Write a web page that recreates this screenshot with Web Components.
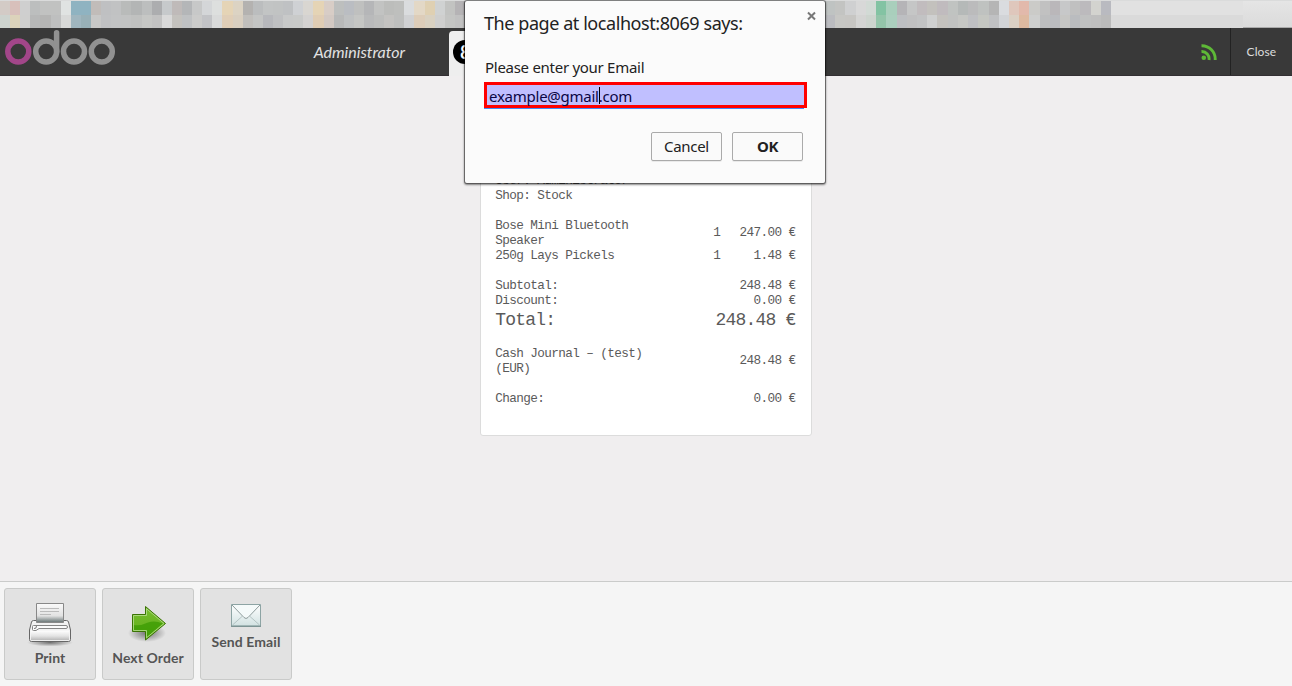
<!DOCTYPE html>
<html lang="en">
<head>
<meta charset="utf-8">
<title>Point of Sale</title>
<style>
html,body{margin:0;height:100%;overflow:hidden}
</style>
</head>
<body>
<pos-app></pos-app>
<script>
function define(name, html, setup){
  const t=document.createElement('template'); t.innerHTML=html;
  customElements.define(name, class extends HTMLElement{
    constructor(){ super(); this.attachShadow({mode:'open'}).append(t.content.cloneNode(true)); }
    connectedCallback(){ if(setup) setup(this,this.shadowRoot); }
  });
}

/* Pixelated browser strip above the page */
const mosaic={
  left:[
   'd3cbc6 d8c0bb cfcfcf bcbebe c1c2c1 c1c2c1 e0e3e2 8fb3c1 8fb3c1 c1bcb9 bfc0c2 c1c2c3 b9bbba b3b5b5 bcbebe acadaf c6c9cb bfbab9 b4b6b8 c7c8c8 d4d6d8 dddfde e5d4b6 dcd3c3 b4b2b0 bbbdbe c2c4c4 c1c3c3 bfc1c3 cfd1d4 d9d6d1 e5d4b5 d8cdc6 bdbfbe babdc2 bfc0bf b5b6b8 c2c3c2 bcbdbb bebfbd dadcde e3d8c6 dfd0b2 d0d2d2 c2c3c1 b5b3b5',
   'cdd3ce dcd3bb cfcfce b7b8b8 b5b5b4 bebfbf d8d9d8 a0b6bf 98b0b7 c8c8c7 c0c1c3 c2c3c4 c2c3c3 c0c1c0 c6c7c5 c2c2c2 d9d9d9 c4c2be bfc1c3 cbcbca c2c3c6 d9dada e0ceb7 d9cfc0 c1bfbc c4c5c4 b7b8bc bfc0c2 c8c9c9 c9cac9 d4d2d1 e0cdb4 d3c9c3 b8b9b9 bfc1c2 c5c6c4 b9babb bdbebd c4c3c1 bebfbe d0d1d3 ddcdb9 d9d1c1 cfcfce c4c5c3 c1c1c1'],
  right:[
   'bfc3c2 c3c4c2 cfd0d1 d8d8d8 d2dad5 83c3a3 a9cfbc b5b4b7 c5c6c6 c1bcbe c3c1bd c0bbbe c0c3c1 b5b9b8 bbbbbc bfc2c0 b5b5b5 dadcdf dfc7bc e2b9ab cbcbc8 c1c1c1 bab7ba c7c8c9 c0c0c0 bcbabd d3d3cf b9bac0',
   'bbbcc0 c7c7c4 c7c6c3 d4d4d3 cdd4ce 94c5aa abcfbe bdbfc2 c0c0c1 c2c3c4 cfd0d0 c4c2be c1c2c1 c6c7c4 bfc0c3 c5c7c2 c0c1c3 d2d4d7 dbd0c4 debaa1 cecfce bdbebf bbbcc0 c6c6c4 babcbf c0c1c1 bfbfbf bbbbbb']};
define('mosaic-strip',`<style>
:host{display:flex;height:28px;background:#dfdfdf;border-top:1px solid #dadbdb;box-sizing:border-box}
.part{display:grid;grid-template-rows:14px 13px}
.row{display:flex}.row i{flex:1}
.left{width:465px}.mid{width:360px;background:#c5c5c5}.right{width:286px}
.end{flex:1;display:flex;background:linear-gradient(#e1e1e1 0 14px,#dadada 14px)}
.end b{margin-left:auto;width:49px;background:linear-gradient(#e5e5e5,#dbdbdb);border-bottom:1px solid #aaa}
</style><div class="part left"></div><div class="mid"></div><div class="part right"></div><div class="end"><b></b></div>`,
(el,r)=>{ for(const side of ['left','right']) for(const line of mosaic[side]){
  const row=document.createElement('div'); row.className='row';
  for(const c of line.split(' ')){ const i=document.createElement('i'); i.style.background='#'+c; row.append(i); }
  r.querySelector('.'+side).append(row);
}});

define('odoo-logo',`<style>:host{display:block;width:120px;height:48px}svg{display:block}</style>
<svg width="120" height="48" fill="none" stroke-width="5.5" stroke="#919191" stroke-linecap="round">
<circle cx="18.3" cy="23.5" r="10.5" stroke="#a24689"/><circle cx="46.2" cy="23.5" r="10.5"/><path d="M56.6 4.8V23.5"/><circle cx="74" cy="23.5" r="10.5"/><circle cx="101.8" cy="23.5" r="10.5"/></svg>`);

define('top-bar',`<style>
:host{display:flex;height:48px;background:#393939;color:#ddd;font-family:Lato,sans-serif;box-sizing:border-box;border-bottom:1px solid #332f33}
.user{width:316px;text-align:right;padding-right:13px;font:italic 16px/47px Lato,sans-serif;margin-left:-31px;color:#e2e2e2}
.tab{margin:3px 0 0 31px;height:45px;width:120px;box-sizing:border-box;padding:9px 0 0 4px;background:#eee;border-radius:4px 4px 0 0}
.tab b{display:block;width:24px;height:24px;border-radius:12px;background:#000;color:#fff;font-size:18px;line-height:24px;text-indent:7px}
.sp{flex:1}
.feed{width:31.5px;padding-top:16px}
.feed svg{display:block}
.close{width:62px;box-sizing:border-box;border-left:1px solid #222;font-size:12px;letter-spacing:.12px;line-height:48px;padding-left:15.5px}
odoo-logo{margin-left:-.3px;margin-right:.3px}
</style><odoo-logo></odoo-logo><span class="user">Administrator</span><span class="tab"><b>8</b></span><span class="sp"></span>
<span class="feed"><svg width="18" height="17" fill="none" stroke="#5eb937" stroke-width="2.9"><circle cx="4.8" cy="13.8" r="2.3" fill="#5eb937" stroke="none"/><path d="M2.500 7.500a7.300 7.300 0 0 1 7.500 8.500M2.500 1.700A13.500 13.500 0 0 1 16.200 16"/></svg></span><span class="close">Close</span>`);

define('receipt-row',`<style>
:host{display:flex;align-items:center;line-height:15px}
.n{width:150px;white-space:pre-line}.q{width:75px;text-align:right}.a{flex:1;text-align:right;white-space:pre}
:host([tall]) .q,:host([tall]) .a{margin-top:-1px}
:host([big]){font-size:18px;letter-spacing:-.8px;line-height:25px}
:host([gap]){margin-top:15px}
</style><span class="n"><slot></slot></span><span class="q"></span><span class="a"></span>`,
(el,r)=>{ r.querySelector('.q').textContent=el.getAttribute('qty')||''; r.querySelector('.a').textContent=el.getAttribute('amount')||''; });

define('sale-receipt',`<style>
:host{display:block;box-sizing:border-box;width:332px;height:332px;margin:28px auto 0;padding:67.5px 15.5px 0 14.3px;background:#fff;border:1px solid #dcdcdc;border-radius:3px;color:#5a5a5a;font:12.7px "Liberation Mono",monospace;letter-spacing:-.62px}
</style>
<receipt-row>User: Administrator</receipt-row><receipt-row>Shop: Stock</receipt-row>
<receipt-row gap tall qty="1" amount="247.00 €">Bose Mini Bluetooth Speaker</receipt-row>
<receipt-row qty="1" amount="1.48 €">250g Lays Pickels</receipt-row>
<receipt-row gap amount="248.48 €">Subtotal:</receipt-row><receipt-row amount="0.00 €">Discount:</receipt-row>
<receipt-row big amount="248.48 €">Total:</receipt-row>
<receipt-row tall style="margin-top:13px" amount="248.48 €">Cash Journal – (test) (EUR)</receipt-row>
<receipt-row gap amount="0.00 €">Change:</receipt-row>`);

define('action-button',`<style>
:host{display:flex;flex-direction:column;align-items:center;box-sizing:border-box;width:92px;height:92px;background:#e2e2e2;border:1px solid #c9cac9;border-radius:3px;color:#555;font:bold 14px/18px Lato,sans-serif;letter-spacing:.08px;padding-top:10px;white-space:nowrap}
.ic{height:50px}:host([small]) .ic{height:34px}
::slotted(svg){display:block}
</style><span class="ic"><slot name="icon"></slot></span><span><slot></slot></span>`);

define('action-bar',`<style>
:host{display:flex;box-sizing:border-box;height:105px;gap:6px;padding:6px 4px;background:#f5f5f5;border-top:1px solid #cacbca}
</style>
<action-button><svg slot="icon" width="48" height="48" viewBox="0 0 48 48"><defs><linearGradient id="g" x2="0" y2="1"><stop stop-color="#fff"/><stop offset=".55" stop-color="#e3e3e3"/><stop offset="1" stop-color="#b4b4b4"/></linearGradient><radialGradient id="s"><stop stop-color="#000" stop-opacity=".5"/><stop offset="1" stop-color="#000" stop-opacity="0"/></radialGradient><linearGradient id="p" x2="0" y2="1"><stop stop-color="#fafafa"/><stop offset=".65" stop-color="#e2e2e2"/><stop offset="1" stop-color="#657272"/></linearGradient></defs>
<ellipse cx="24" cy="43.500" rx="23" ry="4" fill="url(#s)"/><path d="M7.500 21.500H40.500Q42 21.500 42.500 23L44.500 31V40.500Q44.500 42.500 42.500 42.500H5.500Q3.500 42.500 3.500 40.500V31L5.500 23Q6 21.500 7.500 21.500Z" fill="#f2f2f2" stroke="#666"/><path d="M4.500 31.500H43.500V40.500Q43.500 41.500 42.500 41.500H5.500Q4.500 41.500 4.500 40.500Z" fill="url(#g)" stroke="#f5f5f5" stroke-width=".8"/><path d="M10.500 4.500H37.500V23.500H10.500Z" fill="url(#p)" stroke="#888"/><path d="M14 9.500H33M14 12.500H33M14 15.500H25" stroke="#bbb"/><path d="M7.500 26.500H40Q41.500 26.500 41.500 28T40 29.500H13L10 31.500H7.500Q6.500 31.500 6.500 30.500V27.500Q6.500 26.500 7.500 26.500Z" fill="#fbfbfb" stroke="#858585"/><path d="M8 29.500Q10.500 30 10.500 27" stroke="#777" fill="none"/></svg>Print</action-button>
<action-button><svg slot="icon" width="48" height="48" viewBox="0 0 48 48"><defs><radialGradient id="s"><stop stop-color="#000" stop-opacity=".28"/><stop offset="1" stop-color="#000" stop-opacity="0"/></radialGradient><linearGradient id="a" x2="0" y2="1"><stop stop-color="#78bd32"/><stop offset="1" stop-color="#5cae12"/></linearGradient></defs><ellipse cx="23" cy="34" rx="19" ry="9" fill="url(#s)"/><path d="M8.500 15.500H21.500V7.500L41.500 24.500L21.500 41V32.500H8.500Z" fill="url(#a)" stroke="#3a7304"/><path d="M9.500 26Q17 27 24 23.500Q31 21 38.500 24.500L22.500 38.500V31.500H9.500Z" fill="#379800" opacity=".7"/><path d="M9.500 16.500H22.500V9.700L40 24.500L22.500 38.800V31.500H9.500Z" fill="none" stroke="#b8df91" stroke-width=".8"/></svg>Next Order</action-button>
<action-button small><svg slot="icon" width="32" height="32" viewBox="0 0 32 32"><defs><linearGradient id="m" x2="0" y2="1"><stop stop-color="#fff"/><stop offset="1" stop-color="#d2e2e2"/></linearGradient></defs><path d="M1.500 5.500H30.500V27H1.500Z" fill="url(#m)" stroke="#8da4a4"/><path d="M1 27.300H31" stroke="#6f8989"/><path d="M2.500 26L12 17.500M29.500 26L20 17.500" stroke="#a9baba" stroke-width=".8"/><path d="M2 6L14 18.500Q16 20.500 18 18.500L30 6" fill="#f5fafa" stroke="#8e9c9c"/></svg>Send Email</action-button>`);

define('prompt-dialog',`<style>
:host{display:block;position:absolute;left:464px;top:0;width:362px;height:184px;box-sizing:border-box;background:#fbfbfb;background-clip:padding-box;border:1px solid #0005;border-radius:3px;box-shadow:0 1px 2px #0007;color:#222;font:15px/20px "Noto Sans",sans-serif;padding:10px 18px 0 19px}
header{display:flex;justify-content:space-between;height:47px}
h1{font:18px/25px "Noto Sans",sans-serif;margin:0;letter-spacing:-.43px;white-space:nowrap}
svg{display:block;margin:0 -8.5px 0 0}
label{display:block;margin-left:1px;height:24px;line-height:18px;font-size:15px;letter-spacing:-.28px}
.field{box-sizing:border-box;width:323px;height:26px;border:3px solid red;background:#c0bfff;color:#0b0644;line-height:22px;padding:1px 0 0 2px;display:flex;align-items:center;letter-spacing:-.25px}
.line{width:320px;height:1px;background:#438af8}
.field i{width:1px;height:17px;background:#000;margin:0 -1px 0 0}
footer{display:flex;justify-content:flex-end;gap:10px;padding:23px 4px 0 0}
button{box-sizing:border-box;width:71px;height:29px;padding:0 0 2px;border:1px solid #aaa;border-radius:2px;background:#fafafa;box-shadow:0 1px 0 #0001;color:#222;font:15px "Noto Sans",sans-serif;letter-spacing:-.3px}
.ok{font-weight:bold}
</style>
<header><h1>The page at localhost:8069 says:</h1><svg width="9" height="10" stroke="#777" stroke-width="2"><path d="M1 1.500L8 8.500M8 1.500L1 8.500"/></svg></header>
<label>Please enter your Email</label>
<div class="field"><span>example@gmail</span><i></i><span>.com</span></div><div class="line"></div>
<footer><button>Cancel</button><button class="ok">OK</button></footer>`);

define('pos-app',`<style>
:host{display:flex;flex-direction:column;height:686px;background:#f0eeef}
main{flex:1;display:flow-root}
</style><mosaic-strip></mosaic-strip><top-bar></top-bar><main><sale-receipt></sale-receipt></main><action-bar></action-bar><prompt-dialog></prompt-dialog>`);
</script>
</body>
</html>
